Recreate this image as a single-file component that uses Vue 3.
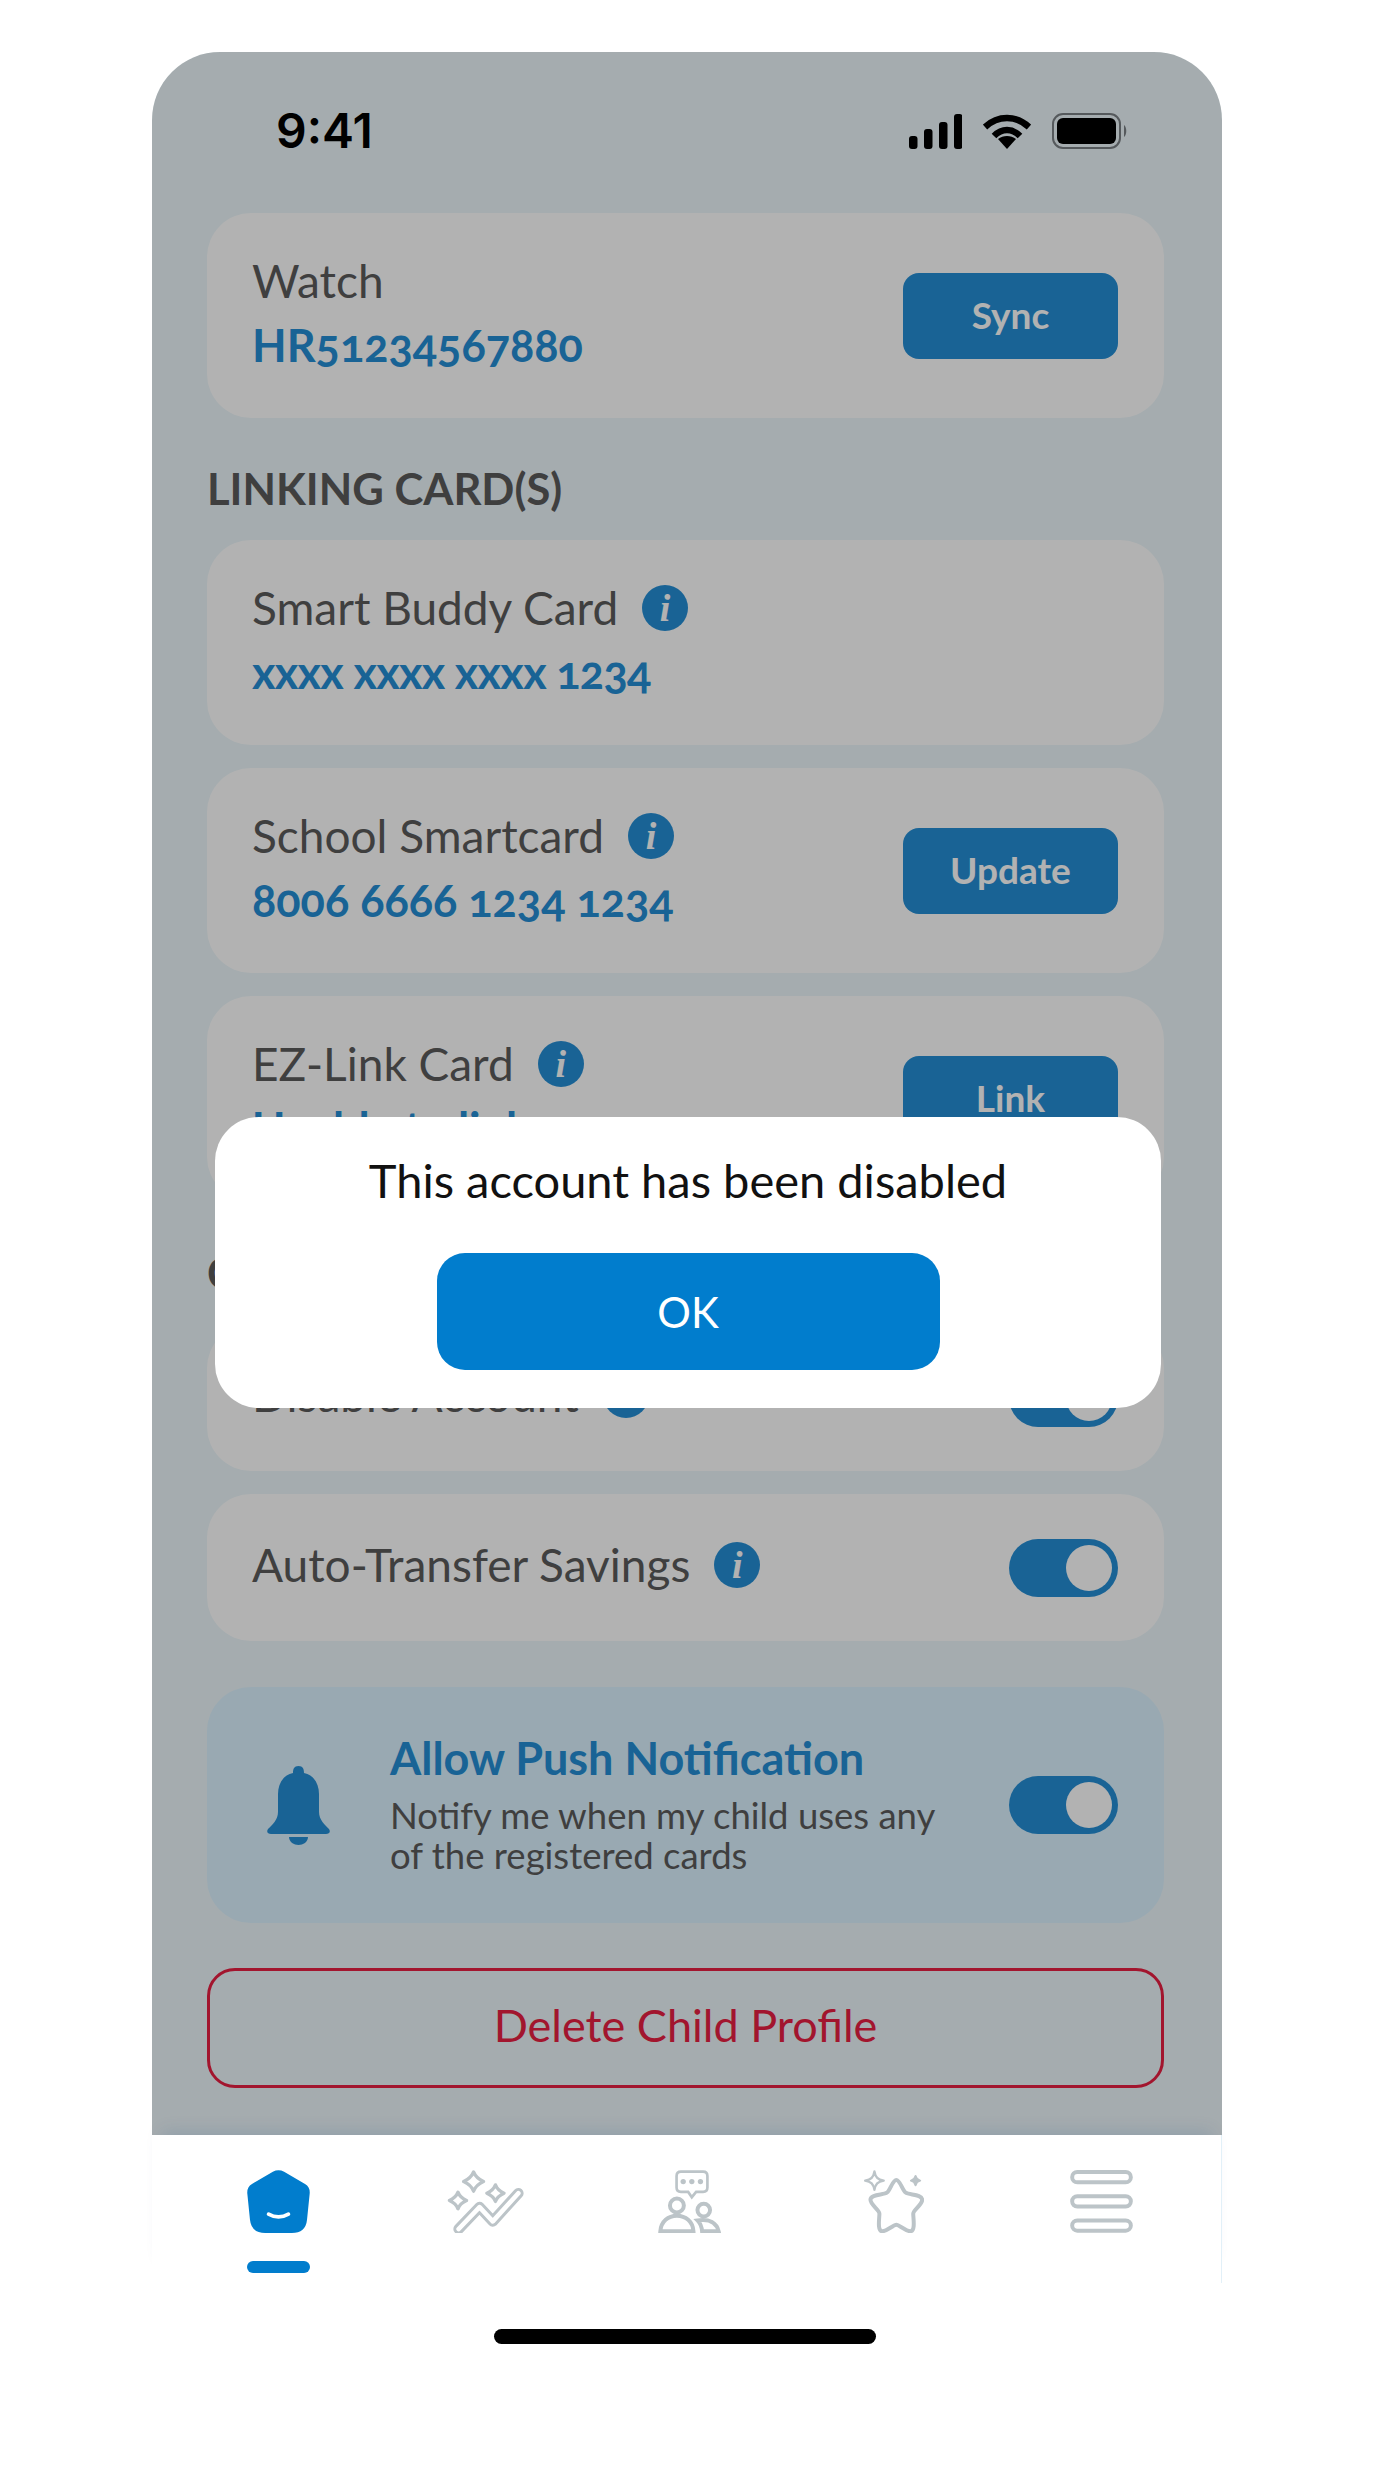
<script setup>
const linkCards = [
  { title: "Smart Buddy Card", number: "xxxx xxxx xxxx 1234", masked: true },
  { title: "School Smartcard", number: "8006 6666 1234 1234", action: "Update" },
  { title: "EZ-Link Card", number: "Unable to link", action: "Link" },
];
const settings = [{ title: "Disable Account" }, { title: "Auto-Transfer Savings" }];
</script>

<template>
  <div class="page">
    <div class="phone">
      <div class="screen">
        <div class="status">
          <span class="time">9:41</span>
          <div class="status-icons">
            <svg width="53" height="35" viewBox="0 0 53 35" fill="#000">
              <rect x="0" y="22" width="8.5" height="13" rx="3" />
              <rect x="15" y="15" width="8.5" height="20" rx="3" />
              <rect x="30" y="8" width="8.5" height="27" rx="3" />
              <rect x="45" y="0" width="8.5" height="35" rx="3" />
            </svg>
            <svg width="48" height="35" viewBox="0 0 48 35" fill="none" stroke="#000" stroke-width="6.5">
              <path d="M2 13 C15 1 33 1 46 13" />
              <path d="M11 22 C19 14 29 14 37 22" />
              <path d="M15 25 L24 35 L33 25 C28 21 20 21 15 25Z" fill="#000" stroke="none" />
            </svg>
            <svg width="76" height="36" viewBox="0 0 76 36">
              <rect x="1" y="1" width="67" height="34" rx="10" fill="none" stroke="#55595c" stroke-width="2" />
              <rect x="5" y="5" width="59" height="26" rx="6" fill="#000" />
              <path d="M72 12 C75 14 75 22 72 24Z" fill="#55595c" />
            </svg>
          </div>
        </div>

        <div class="content">
          <div class="card">
            <div class="card-text">
              <p class="card-title">Watch</p>
              <p class="card-number">HR51234567880</p>
            </div>
            <button class="btn">Sync</button>
          </div>

          <h3 class="section">LINKING CARD(S)</h3>
          <div class="stack">
            <div v-for="item in linkCards" :key="item.title" class="card">
              <div class="card-text">
                <p class="card-title">
                  {{ item.title }}
                  <span class="info">i</span>
                </p>
                <p class="card-number" :class="{ masked: item.masked }">{{ item.number }}</p>
              </div>
              <button v-if="item.action" class="btn">{{ item.action }}</button>
            </div>
          </div>

          <h3 class="section second">CONTROLS</h3>
          <div class="stack">
            <div v-for="item in settings" :key="item.title" class="card card-short">
              <p class="card-title">
                {{ item.title }}
                <span class="info">i</span>
              </p>
              <div class="toggle"><span class="thumb"></span></div>
            </div>
          </div>

          <div class="push">
            <svg class="bell" width="63" height="79" viewBox="0 0 63 79" fill="#258fd6">
              <path d="M31.500 0 C36 0 37 3 37 7 C47 9 52 18 52 28 L52 46 C52 54 58 59 62 63 C64 66 62 68 59 68 L4 68 C1 68 -1 66 1 63 C5 59 11 54 11 46 L11 28 C11 18 16 9 26 7 C26 3 27 0 31.500 0Z" />
              <path d="M22 71 L41 71 C41 76 36 79 31.500 79 C27 79 22 76 22 71Z" />
            </svg>
            <div class="push-text">
              <p class="push-title">Allow Push Notification</p>
              <p class="push-desc">Notify me when my child uses any of the registered cards</p>
            </div>
            <div class="toggle"><span class="thumb"></span></div>
          </div>

          <button class="delete">Delete Child Profile</button>
        </div>

        <div class="scrim"></div>
      </div>

      <nav class="nav">
        <div class="nav-item active">
          <svg width="63" height="63" viewBox="0 0 190 190">
            <path d="M78 5 Q95 -4 112 5 L175 42 Q191 51 189 72 L181 150 Q177 190 135 190 L55 190 Q13 190 9 150 L1 72 Q-1 51 15 42Z" fill="#017dcd" />
            <path d="M65 133 Q95 150 125 133" fill="none" stroke="#fff" stroke-width="11" stroke-linecap="round" />
          </svg>
          <span class="nav-bar"></span>
        </div>
        <div class="nav-item">
          <svg width="77" height="63" viewBox="0 0 230 190" fill="none">
            <path d="M34 178 L97 112 L137 155 L214 70" stroke="#bcc4c8" stroke-width="32" stroke-linecap="round" stroke-linejoin="round" />
            <path d="M34 178 L97 112 L137 155 L214 70" stroke="#fff" stroke-width="14" stroke-linecap="round" stroke-linejoin="round" />
            <g stroke="#bcc4c8" stroke-width="10" stroke-linejoin="round">
              <path transform="translate(79 35)" d="M0 -29 C6 -14 14 -7 30 0 C14 7 6 14 0 29 C-6 14 -14 7 -30 0 C-14 -7 -6 -14 0 -29Z" />
              <path transform="translate(32 92)" d="M0 -25 C5 -12 12 -6 26 0 C12 6 5 12 0 25 C-5 12 -12 6 -26 0 C-12 -6 -5 -12 0 -25Z" />
              <path transform="translate(145 70)" d="M0 -25 C5 -12 12 -6 26 0 C12 6 5 12 0 25 C-5 12 -12 6 -26 0 C-12 -6 -5 -12 0 -25Z" />
            </g>
          </svg>
        </div>
        <div class="nav-item">
          <svg width="63" height="63" viewBox="0 0 188 190" fill="none" stroke="#bcc4c8" stroke-width="11">
            <path d="M68 5 L135 5 Q148 5 148 18 L148 53 Q148 66 135 66 L114 66 L101 82 L90 66 L68 66 Q55 66 55 53 L55 18 Q55 5 68 5Z" stroke-width="8" />
            <circle cx="75" cy="35" r="8" fill="#bcc4c8" stroke="none" />
            <circle cx="101" cy="35" r="8" fill="#bcc4c8" stroke="none" />
            <circle cx="127" cy="35" r="8" fill="#bcc4c8" stroke="none" />
            <circle cx="56" cy="107" r="21" stroke-width="12" />
            <path d="M6 185 C8 155 30 138 56 138 C82 138 104 155 106 185Z" stroke-width="12" />
            <circle cx="137" cy="121" r="19" stroke-width="12" />
            <path d="M118 152 C155 146 176 160 182 185 L132 185 C131 172 126 160 118 152Z" stroke-width="12" />
          </svg>
        </div>
        <div class="nav-item">
          <svg width="60" height="63" viewBox="0 0 180 190" fill="none" stroke="#bcc4c8">
            <path d="M97 30 C108 30 115 60 125 68 C135 76 175 72 175 90 C175 105 148 120 148 132 C148 145 155 183 140 185 C128 186 105 165 97 165 C89 165 66 186 54 185 C39 183 46 145 46 132 C46 120 19 105 19 90 C19 72 59 76 69 68 C79 60 86 30 97 30Z" stroke-width="12" />
            <path transform="translate(31 32)" d="M0 -28 C3 -10 10 -3 28 0 C10 3 3 10 0 28 C-3 10 -10 3 -28 0 C-10 -3 -3 -10 0 -28Z" stroke-width="7" stroke-linejoin="round" />
            <path transform="translate(155 32)" d="M0 -14 C2 -5 5 -2 14 0 C5 2 2 5 0 14 C-2 5 -5 2 -14 0 C-5 -2 -2 -5 0 -14Z" fill="#bcc4c8" stroke-width="6" stroke-linejoin="round" />
          </svg>
        </div>
        <div class="nav-item">
          <svg width="63" height="63" viewBox="0 0 189 190" fill="none" stroke="#bcc4c8" stroke-width="12">
            <rect x="6" y="6" width="177" height="31" rx="15.500" />
            <rect x="6" y="79" width="177" height="31" rx="15.500" />
            <rect x="6" y="152" width="177" height="31" rx="15.500" />
          </svg>
        </div>
      </nav>

      <div class="home-bar"></div>

      <div class="modal">
        <p class="modal-text">This account has been disabled</p>
        <button class="modal-btn">OK</button>
      </div>
    </div>
  </div>
</template>

<style scoped>
.page {
  width: 1374px;
  height: 2475px;
  padding-top: 52px;
  box-sizing: border-box;
  background: #fff;
  font-family: "Lato", "Open Sans", sans-serif;
  overflow: hidden;
}

.phone {
  position: relative;
  width: 1070px;
  margin-left: 152px;
}

p,
h3 {
  margin: 0;
}

.screen {
  position: relative;
  height: 2083px;
  background: #ecf7fb;
  border-radius: 68px 68px 0 0;
  overflow: hidden;
}

.status {
  height: 161px;
  box-sizing: border-box;
  padding: 56px 94px 0 124px;
  display: flex;
  justify-content: space-between;
  align-items: flex-start;
}

.time {
  font-family: "Inter", sans-serif;
  font-weight: 600;
  font-size: 48px;
  line-height: 46px;
  color: #000;
  position: relative;
  z-index: 2;
}

.status-icons {
  display: flex;
  align-items: center;
  gap: 21px;
  padding-top: 5px;
  position: relative;
  z-index: 2;
}

.content {
  padding: 0 58px 0 55px;
  display: flex;
  flex-direction: column;
}

.stack {
  display: flex;
  flex-direction: column;
  gap: 23px;
}

.card {
  height: 205px;
  box-sizing: border-box;
  padding: 0 46px 0 45px;
  background: #fff;
  border-radius: 44px;
  display: flex;
  align-items: center;
  justify-content: space-between;
}

.card-short {
  height: 147px;
}

.card-short .card-title {
  padding-bottom: 6px;
}

.card-text {
  display: flex;
  flex-direction: column;
  gap: 13px;
  padding-bottom: 6px;
}

.card-title {
  font-size: 46px;
  line-height: 52px;
  color: #5b5b5b;
  display: flex;
  align-items: center;
  gap: 24px;
}

.card-number {
  font-size: 45px;
  line-height: 50px;
  font-weight: 700;
  color: #258fd6;
  font-feature-settings: "onum" 1;
}

.card-number.masked {
  letter-spacing: -0.7px;
}

.info {
  width: 46px;
  height: 46px;
  border-radius: 50%;
  background: #258fd6;
  color: #fff;
  font-family: "Liberation Serif", serif;
  font-style: italic;
  font-weight: 700;
  font-size: 38px;
  line-height: 46px;
  text-align: center;
}

.btn {
  width: 215px;
  height: 86px;
  padding: 0 0 3px;
  border: 0;
  border-radius: 16px;
  background: #258fd6;
  color: #fff;
  font-family: inherit;
  font-size: 37px;
  font-weight: 700;
}

.section {
  font-size: 43.5px;
  line-height: 50px;
  font-weight: 700;
  color: #5b5b5b;
  margin: 45px 0 27px;
}

.section.second {
  margin: 0 0 27px;
  padding-top: 46px;
}

.toggle {
  width: 109px;
  height: 58px;
  border-radius: 29px;
  background: #258fd6;
  position: relative;
  flex: none;
}

.thumb {
  position: absolute;
  top: 6px;
  right: 6px;
  width: 46px;
  height: 46px;
  border-radius: 50%;
  background: #fff;
}

.push {
  margin-top: 46px;
  height: 236px;
  box-sizing: border-box;
  padding: 0 46px 0 60px;
  background: #dcf2ff;
  border-radius: 44px;
  display: flex;
  align-items: center;
}

.bell {
  flex: none;
  margin-right: 60px;
}

.push-text {
  flex: 1;
  padding-bottom: 5px;
}

.push-title {
  font-size: 45px;
  line-height: 54px;
  font-weight: 700;
  color: #258fd6;
  margin-bottom: 10px;
}

.push-desc {
  font-size: 36.5px;
  line-height: 40px;
  color: #5b5b5b;
  width: 570px;
}

.delete {
  margin-top: 45px;
  height: 120px;
  padding: 0 0 6px;
  border: 3px solid #e91f42;
  border-radius: 28px;
  background: transparent;
  color: #e91f42;
  font-family: inherit;
  font-size: 45px;
}

.scrim {
  position: absolute;
  inset: 0;
  background: rgba(0, 0, 0, 0.3);
}

.nav {
  height: 148px;
  box-sizing: border-box;
  padding-top: 35px;
  display: flex;
  position: relative;
  background: #fff;
  box-shadow: 0 -14px 16px -10px rgba(0, 70, 130, 0.12), inset -1px 0 #e2f0f8;
}

.nav-item {
  position: absolute;
  top: 35px;
  width: 80px;
  display: flex;
  flex-direction: column;
  align-items: center;
}

.nav-item:nth-child(1) { left: 86px; }
.nav-item:nth-child(2) { left: 293px; }
.nav-item:nth-child(3) { left: 497px; }
.nav-item:nth-child(4) { left: 702px; }
.nav-item:nth-child(5) { left: 909px; }

.nav-bar {
  width: 63px;
  height: 12px;
  margin-top: 28px;
  border-radius: 6px;
  background: #017dcd;
}

.home-bar {
  width: 382px;
  height: 15px;
  border-radius: 8px;
  background: #000;
  margin: 46px 0 0 342px;
}

.modal {
  position: absolute;
  left: 63px;
  top: 1065px;
  width: 946px;
  height: 291px;
  box-sizing: border-box;
  padding-top: 37px;
  background: #fff;
  border-radius: 44px;
  display: flex;
  flex-direction: column;
  align-items: center;
  z-index: 3;
}

.modal-text {
  font-size: 47px;
  line-height: 52px;
  color: #111;
}

.modal-btn {
  margin-top: 47px;
  width: 503px;
  height: 117px;
  border: 0;
  border-radius: 28px;
  background: #017dcd;
  color: #fff;
  font-family: inherit;
  font-size: 42px;
}
</style>
